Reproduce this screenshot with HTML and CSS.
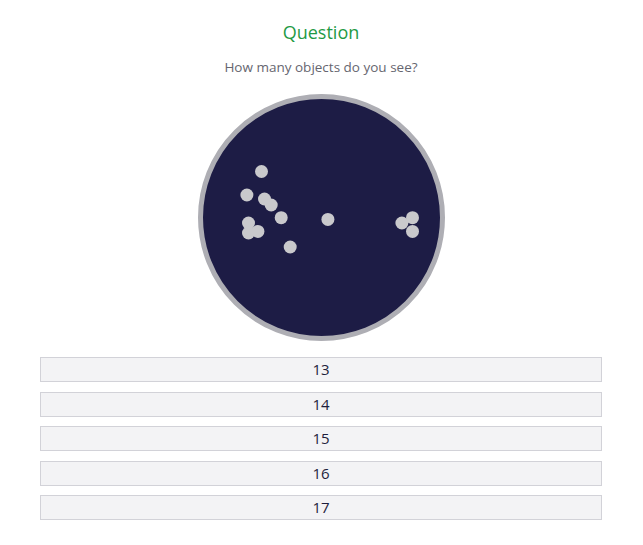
FILE: index.html
```html
<!DOCTYPE html>
<html>
<head>
<meta charset="utf-8">
<link rel="stylesheet" href="styles.css">
</head>
<body>
<div class="page">
  <h1 class="title">Question</h1>
  <p class="prompt">How many objects do you see?</p>
  <div class="canvas">
    <svg width="247" height="247" viewBox="0 0 247 247">
      <circle cx="123.5" cy="123.5" r="121" fill="#1d1c45" stroke="#aeaeb4" stroke-width="5"/>
      <g fill="#c9c9cc">
        <circle cx="63.5" cy="77.5" r="6.5"/>
        <circle cx="48.9" cy="101" r="6.5"/>
        <circle cx="66.5" cy="105" r="6.5"/>
        <circle cx="73.2" cy="111" r="6.5"/>
        <circle cx="83.2" cy="123.7" r="6.5"/>
        <circle cx="50.5" cy="129" r="6.5"/>
        <circle cx="50.5" cy="139" r="6.5"/>
        <circle cx="59.9" cy="137.4" r="6.5"/>
        <circle cx="92.2" cy="153" r="6.5"/>
        <circle cx="129.9" cy="125.4" r="6.5"/>
        <circle cx="203.9" cy="129" r="6.5"/>
        <circle cx="214.5" cy="123.7" r="6.5"/>
        <circle cx="214.5" cy="137.4" r="6.5"/>
      </g>
    </svg>
  </div>
  <div class="answers">
    <button class="answer">13</button>
    <button class="answer">14</button>
    <button class="answer">15</button>
    <button class="answer">16</button>
    <button class="answer">17</button>
  </div>
</div>
</body>
</html>
```
FILE: styles.css
```css
html, body {
  margin: 0;
  padding: 0;
  background: #ffffff;
}
body {
  font-family: "Open Sans", "Noto Sans", sans-serif;
}
.page {
  padding: 19px 41px 0 40px;
  display: flex;
  flex-direction: column;
  align-items: center;
}
.title {
  margin: 0;
  font-size: 18px;
  font-weight: 400;
  color: #1f9a45;
  line-height: 26px;
}
.prompt {
  margin: 12px 0 0;
  font-size: 13.5px;
  color: #666670;
  line-height: 20px;
}
.canvas {
  margin-top: 17px;
  height: 247px;
  width: 247px;
}
.canvas svg {
  display: block;
}
.answers {
  margin-top: 16px;
  align-self: stretch;
  display: flex;
  flex-direction: column;
  gap: 9.6px;
}
.answer {
  height: 25px;
  margin: 0;
  padding: 0;
  background: #f3f3f5;
  border: 1px solid #d2d2d8;
  border-radius: 0;
  font-family: "Open Sans", "Noto Sans", sans-serif;
  font-size: 15px;
  color: #1e1e3c;
  text-align: center;
  line-height: 23px;
}
```
